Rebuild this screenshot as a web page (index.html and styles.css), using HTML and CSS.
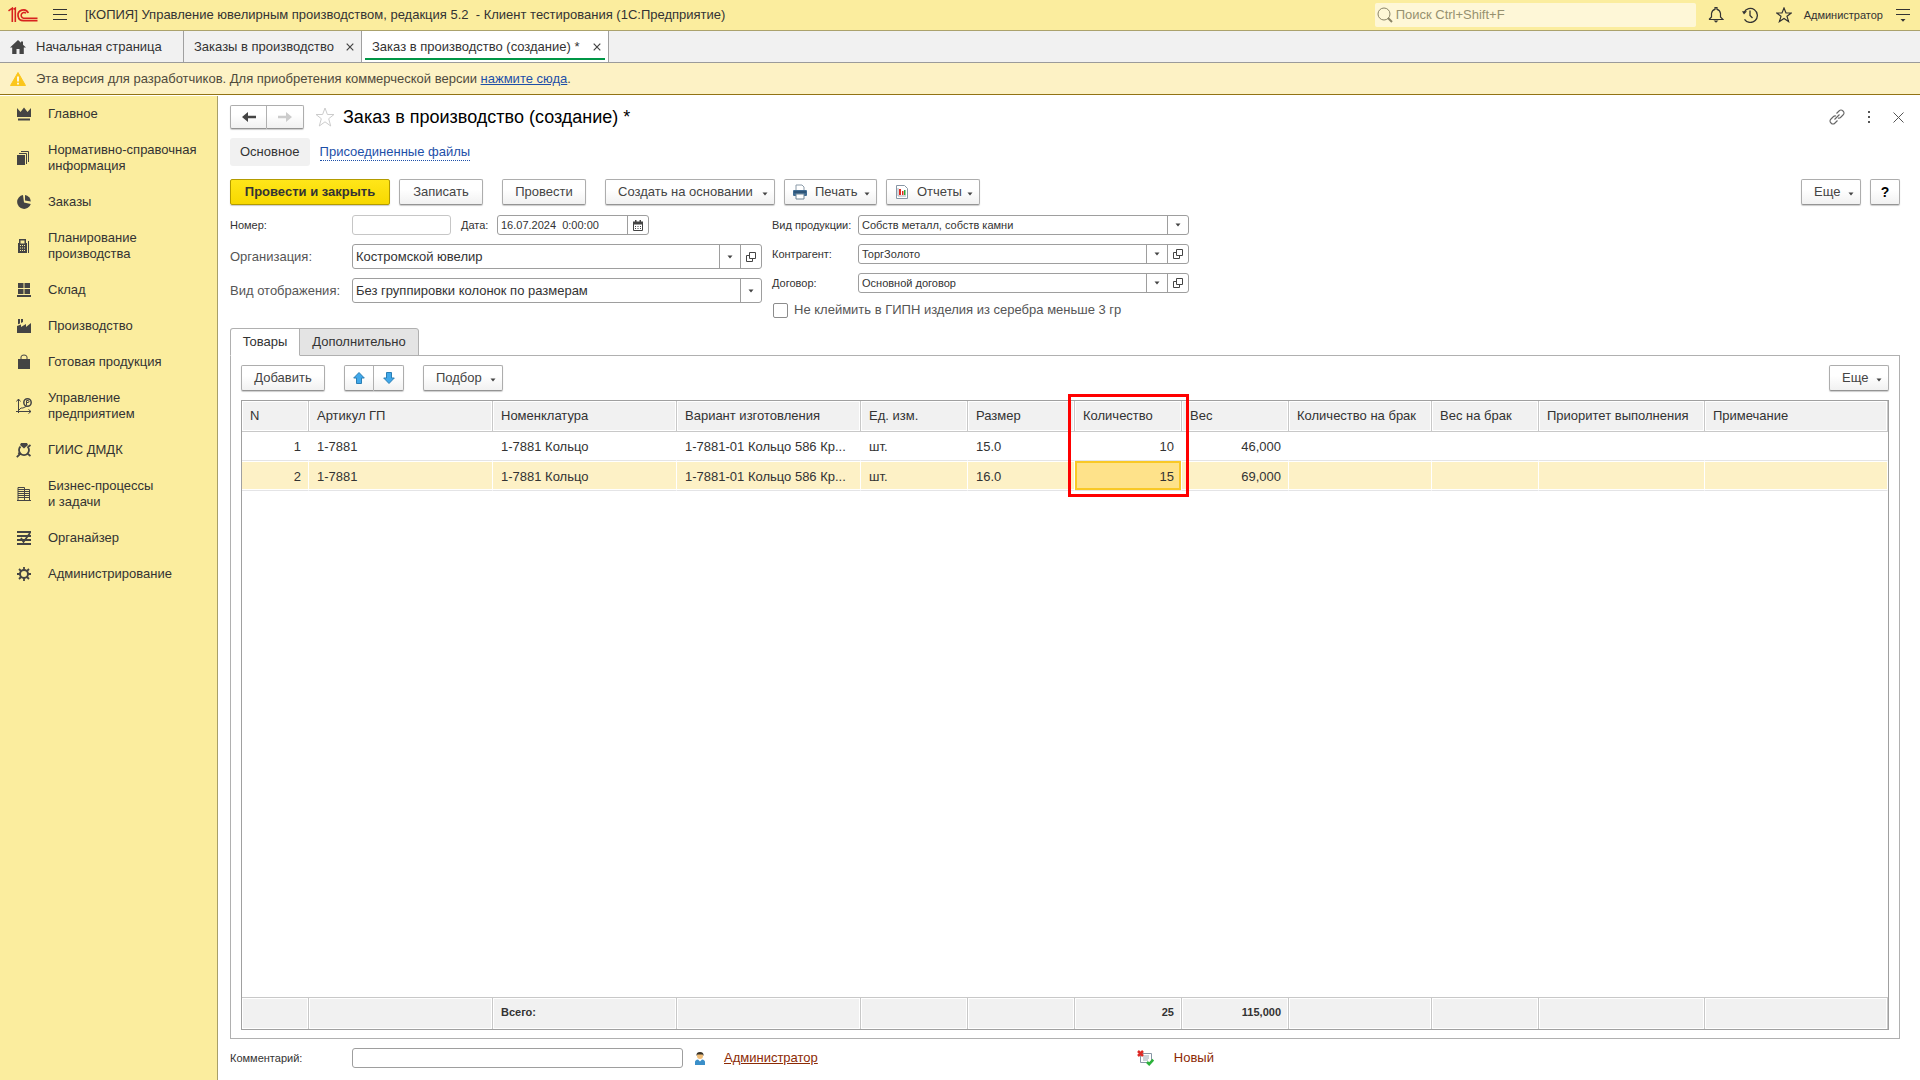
FILE: index.html
```html
<!DOCTYPE html>
<html lang="ru">
<head>
<meta charset="utf-8">
<title>Заказ в производство (создание)</title>
<link rel="stylesheet" href="styles.css">
</head>
<body>
<svg class="defs" aria-hidden="true">
  <symbol id="open" viewBox="0 0 10 10"><path d="M3.5.5h6v6h-6z M3.500 3.500h-3v6h6v-3" fill="none" stroke="#444"/></symbol>
  <symbol id="caret" viewBox="0 0 6 4"><path d="M.5.5h5L3 3.500z" fill="#444"/></symbol>
  <symbol id="cross" viewBox="0 0 8 8"><path d="M.7.7l6.600 6.600M7.300.7L.7 7.300" fill="none" stroke="#444" stroke-width="1.200"/></symbol>
</svg>

<header class="titlebar">
  <svg class="logo" width="30" height="16" viewBox="0 0 30 16" fill="none" stroke="#d8231f"><path d="M.5 3.800L4.300 1.200V15M7.300 15V1.200L5.500 2.200" stroke-width="1.600"/><path d="M20.300 6A5.400 5.400 0 1 0 15.500 13.700H29.500" stroke-width="1.700"/><path d="M18 6.200A2.900 2.900 0 1 0 15.500 11.200H29.500" stroke-width="1.500"/></svg>
  <button class="icon-btn" aria-label="Меню"><svg width="14" height="12" viewBox="0 0 14 12"><path d="M0 .5h14M0 5.500h14M0 10.500h14" stroke="#333"/></svg></button>
  <span class="app-title">[КОПИЯ] Управление ювелирным производством, редакция 5.2&nbsp; - Клиент тестирования (1С:Предприятие)</span>
  <label class="search">
    <svg width="16" height="16" viewBox="0 0 16 16" fill="none" stroke="#8a8467"><circle cx="7" cy="7" r="6"/><path d="M11 11l4 4" stroke-width="2"/></svg>
    <input type="text" placeholder="Поиск Ctrl+Shift+F" aria-label="Поиск">
  </label>
  <button class="icon-btn" aria-label="Оповещения"><svg width="16" height="16" viewBox="0 0 16 16" fill="none" stroke="#333"><path d="M1 12.500H15L12.500 10V6.500Q12 3 9 2.300V.7H7V2.300Q4 3 3.500 6.500V10L1 12.500" stroke-width="1.200"/><path d="M5.500 13.500h5L8 15.700z" fill="#333" stroke="none"/></svg></button>
  <button class="icon-btn" aria-label="История"><svg width="16" height="16" viewBox="0 0 16 16" fill="none" stroke="#333" stroke-width="1.300"><path d="M2 5.500A7 7 0 1 1 2.500 12.300M8 3.500V8.500L10.500 11"/><path d="M0 4.300h5L2 7.500z" fill="#333" stroke="none"/></svg></button>
  <button class="icon-btn" aria-label="Избранное"><svg width="16" height="16" viewBox="0 0 16 16"><path d="M8 1l2 5h5.200l-4.200 3.300 1.600 5.300L8 11.500l-4.600 3.100L5 9.300.8 6H6z" fill="none" stroke="#333" stroke-width="1.200"/></svg></button>
  <span class="user small">Администратор</span>
  <button class="icon-btn" aria-label="Настройки"><svg width="14" height="13" viewBox="0 0 14 13"><path d="M0 .5h14M0 5.500h14" stroke="#333"/><path d="M4.500 10h5L7 12.800z" fill="#333"/></svg></button>
</header>

<nav class="tabs" aria-label="Окна">
  <button class="tab home"><svg width="16" height="14" viewBox="0 0 16 14"><path d="M8 0L0 7.500h2.200V14H6.500V9h3v5h4.300V7.500H16l-3-2.800V1.500h-2v1.300z" fill="#444"/></svg>Начальная страница</button>
  <button class="tab list">Заказы в производство<svg width="8" height="8"><use href="#cross"/></svg></button>
  <button class="tab active">Заказ в производство (создание) *<svg width="8" height="8"><use href="#cross"/></svg></button>
</nav>

<div class="banner">
  <svg width="16" height="14" viewBox="0 0 16 14"><path d="M8 .5L15.500 13.500H.5z" fill="#fbc61c" stroke="#fbc61c"/><path d="M8 4.500V9.500M8 10.700v1.700" stroke="#fff" stroke-width="1.700"/></svg>
  <span>Эта версия для разработчиков. Для приобретения коммерческой версии <a href="#">нажмите сюда</a>.</span>
</div>

<div class="workspace">
  <nav class="sidebar" aria-label="Разделы">
    <a href="#"><svg viewBox="0 0 16 16"><path d="M1 2l3.500 4L8 1.500 11.500 6 15 2v9H1zM2 12.500h12v2H2z"/></svg>Главное</a>
    <a href="#"><svg viewBox="0 0 16 16"><path d="M1 5h8v10H1z"/><path d="M3 3.500h7.500V14M5 1.500h7.500V12" fill="none" stroke="#444"/></svg>Нормативно-справочная информация</a>
    <a href="#"><svg viewBox="0 0 16 16"><path d="M7 1a7 7 0 1 0 7.800 9L8 8.500z"/><path d="M9 1v5.500l5.800 1A6.500 6.500 0 0 0 9 1z"/></svg>Заказы</a>
    <a href="#"><svg viewBox="0 0 16 16"><path fill-rule="evenodd" d="M2 5h1V1h7v4h1v10H2zM4.500 2.500v3h4v-3zM4 7v1h1V7zM6 7v1h1V7zM8 7v1h1V7zM4 9.500v1h1v-1zM6 9.500v1h1v-1zM8 9.500v1h1v-1zM4 12v1h1v-1zM6 12v1h1v-1zM8 12v1h1v-1zM12 3h1v12h-1z"/></svg>Планирование производства</a>
    <a href="#"><svg viewBox="0 0 16 16"><path d="M2 1h5.500v5H2zM8.500 1H14v5H8.500zM2 7h5.500v5H2zM8.500 7H14v5H8.500zM1 13h14v2H1z"/></svg>Склад</a>
    <a href="#"><svg viewBox="0 0 16 16"><path d="M1 15V8l4-1.500V9l5-3v3l5-4v10zM2 1h2v4.500L2 6.300zM5 1h2v3l-2 1z"/></svg>Производство</a>
    <a href="#"><svg viewBox="0 0 16 16"><path d="M2 5h12v10H2z"/><path d="M5 7V3q0-2 3-2t3 2v4" fill="none" stroke="#444"/></svg>Готовая продукция</a>
    <a href="#"><svg viewBox="0 0 16 16"><path d="M2.500 1v14M0 13.500h15M.5 3.500l2-2.500 2 2.500M12.500 11.500l2.500 2-2.500 2M3 12l2-2h2l4-2" fill="none" stroke="#444"/><circle cx="11.500" cy="4.500" r="3.700" fill="none" stroke="#444" stroke-width="1.500"/><path d="M10.500 7V2.500h1.500q1 0 1 1t-1 1h-2" fill="none" stroke="#444"/></svg>Управление предприятием</a>
    <a href="#"><svg viewBox="0 0 16 16"><path d="M5 1h6l1 2-4 3.500L4 3z"/><path d="M4.500 4.500a5 5 0 1 0 7 0M4 12L.8 15.200M2.500 10.500L4 13M12 5l2.500-2M12 12l2.500 2" fill="none" stroke="#444" stroke-width="1.800"/></svg>ГИИС ДМДК</a>
    <a href="#"><svg viewBox="0 0 16 16"><path d="M2 1.500h6.500v13H2zM8.500 3.500h5v11h-5M2 3.500h6.500M2 5.500h11.500M2 7.500h11.500M2 9.500h11.500M2 11.500h11.500M1 14.500h14" fill="none" stroke="#444"/></svg>Бизнес-процессы и&nbsp;задачи</a>
    <a href="#"><svg viewBox="0 0 16 16"><path d="M1 2h14M1 6h14M1 10h14M1 14h14" fill="none" stroke="#444" stroke-width="1.800"/><path d="M5 8l2.500 4L14 3" fill="none" stroke="#444" stroke-width="1.800"/></svg>Органайзер</a>
    <a href="#"><svg viewBox="0 0 16 16"><g fill="none" stroke="#444"><circle cx="8" cy="8" r="4" stroke-width="2"/><path d="M8 1v3M8 12v3M1 8h3M12 8h3M3 3l2 2M11 11l2 2M13 3l-2 2M5 11l-2 2" stroke-width="1.800"/></g></svg>Администрирование</a>
  </nav>

  <main class="form">
    <div class="form-head">
      <div class="pair nav-pair">
        <button class="btn" aria-label="Назад"><svg width="14" height="10" viewBox="0 0 14 10"><path d="M6 0L0 5l6 5V6.200h8V3.800H6z" fill="#444"/></svg></button><button class="btn" aria-label="Вперед"><svg width="14" height="10" viewBox="0 0 14 10"><path d="M8 0l6 5-6 5V6.200H0V3.800h8z" fill="#ccc"/></svg></button>
      </div>
      <svg width="20" height="20" viewBox="0 0 20 20"><path d="M10 1l2.400 6.500H19l-5.300 4.200 2 7.300L10 14.800 4.300 19l2-7.300L1 7.500h6.600z" fill="none" stroke="#ccc"/></svg>
      <h1>Заказ в производство (создание) *</h1>
      <div class="head-tools">
        <button class="icon-btn" aria-label="Ссылка"><svg width="16" height="16" viewBox="0 0 16 16" fill="none" stroke="#666" stroke-width="1.100"><path d="M7.500 4.500L10 2q2-2 4 0t0 4l-2.500 2.500q-1 1-2.500.5M8.500 11.500L6 14q-2 2-4 0t0-4l2.500-2.500q1-1 2.500-.5M5.500 10.500l5-5"/></svg></button>
        <button class="icon-btn" aria-label="Действия"><svg width="4" height="12" viewBox="0 0 4 12"><path d="M1 0h2v2H1zM1 5h2v2H1zM1 10h2v2H1z" fill="#555"/></svg></button>
        <button class="icon-btn" aria-label="Закрыть"><svg width="11" height="11" viewBox="0 0 11 11"><path d="M.5.5l10 10M10.500.5l-10 10" stroke="#555"/></svg></button>
      </div>
    </div>

    <nav class="sections" aria-label="Разделы формы">
      <span class="current">Основное</span>
      <a href="#">Присоединенные файлы</a>
    </nav>

    <div class="commands">
      <button class="btn primary">Провести и закрыть</button>
      <button class="btn save">Записать</button>
      <button class="btn save apart">Провести</button>
      <button class="btn create apart menu">Создать на основании<svg width="6" height="4"><use href="#caret"/></svg></button>
      <button class="btn menu iconed"><svg width="16" height="16" viewBox="0 0 16 16"><path d="M4 1h6l2 2v4H4z" fill="#fff" stroke="#8a9aa8"/><rect x="1" y="6" width="14" height="6" rx="1" fill="#3f6c93"/><path d="M2 8h12" stroke="#1f3f5c"/><path d="M4 10h8v5H4z" fill="#fff" stroke="#6f8494"/></svg>Печать<svg width="6" height="4"><use href="#caret"/></svg></button>
      <button class="btn menu iconed"><svg width="16" height="16" viewBox="0 0 16 16"><path d="M2.500 1.500h8l3 3v10h-11z" fill="#fff" stroke="#8796a5"/><path d="M5 5h2v6H5z" fill="#e02a20"/><path d="M8 7h1.500v4H8z" fill="#e02a20"/><path d="M10 6h1.500v5H10z" fill="#2aa83a"/><path d="M4 4v8h8" fill="none" stroke="#a7b2bc"/></svg>Отчеты<svg width="6" height="4"><use href="#caret"/></svg></button>
      <button class="btn menu end">Еще<svg width="6" height="4"><use href="#caret"/></svg></button>
      <button class="btn help">?</button>
    </div>

    <div class="fields">
      <div class="col-left">
        <div class="row small">
          <label class="lbl" for="num">Номер:</label>
          <span class="box num"><input id="num" type="text"></span>
          <label class="date-lbl" for="date">Дата:</label>
          <span class="box date"><input id="date" type="text" value="16.07.2024  0:00:00"><button aria-label="Календарь"><svg width="10" height="11" viewBox="0 0 10 11"><path d="M.5 2.500h9v8h-9z" fill="none" stroke="#444"/><path d="M0 1.500h10v3H0zM2 0h1.500v2H2zM6.500 0H8v2H6.500zM2 6h1v1H2zM4.500 6h1v1h-1zM7 6h1v1H7zM2 8h1v1H2zM4.500 8h1v1h-1zM7 8h1v1H7z" fill="#444"/></svg></button></span>
        </div>
        <div class="row">
          <label class="lbl" for="org">Организация:</label>
          <span class="box"><input id="org" type="text" value="Костромской ювелир"><button aria-label="Выбрать"><svg width="6" height="4"><use href="#caret"/></svg></button><button aria-label="Открыть"><svg width="10" height="10"><use href="#open"/></svg></button></span>
        </div>
        <div class="row">
          <label class="lbl" for="view">Вид отображения:</label>
          <span class="box"><input id="view" type="text" value="Без группировки колонок по размерам"><button aria-label="Выбрать"><svg width="6" height="4"><use href="#caret"/></svg></button></span>
        </div>
      </div>
      <div class="col-right">
        <div class="row small">
          <label class="lbl" for="kind">Вид продукции:</label>
          <span class="box"><input id="kind" type="text" value="Собств металл, собств камни"><button aria-label="Выбрать"><svg width="6" height="4"><use href="#caret"/></svg></button></span>
        </div>
        <div class="row small">
          <label class="lbl" for="agent">Контрагент:</label>
          <span class="box"><input id="agent" type="text" value="ТоргЗолото"><button aria-label="Выбрать"><svg width="6" height="4"><use href="#caret"/></svg></button><button aria-label="Открыть"><svg width="10" height="10"><use href="#open"/></svg></button></span>
        </div>
        <div class="row small">
          <label class="lbl" for="deal">Договор:</label>
          <span class="box"><input id="deal" type="text" value="Основной договор"><button aria-label="Выбрать"><svg width="6" height="4"><use href="#caret"/></svg></button><button aria-label="Открыть"><svg width="10" height="10"><use href="#open"/></svg></button></span>
        </div>
        <label class="check"><input type="checkbox">Не клеймить в ГИПН изделия из серебра меньше 3 гр</label>
      </div>
    </div>

    <div class="pages">
      <button class="page active">Товары</button><button class="page">Дополнительно</button>
    </div>
    <section class="panel">
      <div class="commands">
        <button class="btn save">Добавить</button>
        <div class="pair apart">
          <button class="btn" aria-label="Вверх"><svg width="12" height="12" viewBox="0 0 12 12"><path d="M6 .5L11.300 6H8.500v5.500h-5V6H.7z" fill="#41a8ea" stroke="#2b7fb5"/></svg></button><button class="btn" aria-label="Вниз"><svg width="12" height="12" viewBox="0 0 12 12"><path d="M6 11.500L11.300 6H8.500V.5h-5V6H.7z" fill="#41a8ea" stroke="#2b7fb5"/></svg></button>
        </div>
        <button class="btn pick menu apart">Подбор<svg width="6" height="4"><use href="#caret"/></svg></button>
        <button class="btn menu end">Еще<svg width="6" height="4"><use href="#caret"/></svg></button>
      </div>
      <div class="grid">
        <table>
          <colgroup><col class="w-n"><col class="w-l"><col class="w-l"><col class="w-l"><col class="w-s"><col class="w-s"><col class="w-s"><col class="w-s"><col class="w-q"><col class="w-s"><col class="w-p"><col></colgroup>
          <thead>
            <tr><th>N</th><th>Артикул ГП</th><th>Номенклатура</th><th>Вариант изготовления</th><th>Ед. изм.</th><th>Размер</th><th class="marked">Количество<span class="marker"></span></th><th>Вес</th><th>Количество на брак</th><th>Вес на брак</th><th>Приоритет выполнения</th><th>Примечание</th></tr>
          </thead>
          <tbody>
            <tr><td class="r">1</td><td>1-7881</td><td>1-7881 Кольцо</td><td>1-7881-01 Кольцо 586 Кр...</td><td>шт.</td><td>15.0</td><td class="r">10</td><td class="r">46,000</td><td></td><td></td><td></td><td></td></tr>
            <tr class="selected"><td class="r">2</td><td>1-7881</td><td>1-7881 Кольцо</td><td>1-7881-01 Кольцо 586 Кр...</td><td>шт.</td><td>16.0</td><td class="r focus">15</td><td class="r">69,000</td><td></td><td></td><td></td><td></td></tr>
            <tr class="rest"><td colspan="12"></td></tr>
          </tbody>
          <tfoot>
            <tr><td></td><td></td><td>Всего:</td><td></td><td></td><td></td><td class="r">25</td><td class="r">115,000</td><td></td><td></td><td></td><td></td></tr>
          </tfoot>
        </table>
      </div>
    </section>

    <footer class="bottom">
      <div class="row small comment">
        <label class="lbl" for="comment">Комментарий:</label>
        <span class="box"><input id="comment" type="text"></span>
      </div>
      <svg width="10" height="13" viewBox="0 0 10 13"><path d="M0 13V10q0-2 3-2.500l2 2 2-2q3 .5 3 2.500v3z" fill="#3a8fc9"/><circle cx="5" cy="4" r="3" fill="#f0bd78"/><path d="M1.500 4Q1 0 5 0t3.500 4L7.500 2.500h-5z" fill="#3a3428"/></svg>
      <a class="author" href="#">Администратор</a>
      <div class="status">
        <svg width="17" height="16" viewBox="0 0 17 16"><path d="M3.500 3.500h11v9h-11z" fill="#fff" stroke="#8796a5"/><path d="M6 6h6M6 8h6M6 10h5" stroke="#9aa7b3"/><path d="M1 1l5 5M6 1L1 6" stroke="#dd2a26" stroke-width="2.500"/><path d="M10 12l2.200 2.200 4-4.500" fill="none" stroke="#2cb23c" stroke-width="2.500"/></svg>
        <span>Новый</span>
      </div>
    </footer>
  </main>
</div>
</body>
</html>
```
FILE: styles.css
```css
* { box-sizing: border-box; }
body {
  margin: 0;
  min-height: 100vh;
  display: flex;
  flex-direction: column;
  font: 13px/16px "Liberation Sans", Arial, sans-serif;
  color: #333;
  background: #fff;
}
button, input { font: inherit; color: inherit; }
button { margin: 0; padding: 0; cursor: pointer; white-space: nowrap; }
svg { flex: none; display: block; }
.defs { position: absolute; width: 0; height: 0; }
.small { font-size: 11px; }

.titlebar {
  display: flex;
  align-items: center;
  height: 31px;
  padding: 0 10px 0 8px;
  gap: 18px;
  background: #fbed9e;
  border-bottom: 1px solid #aba26c;
}
.titlebar .logo { margin-right: -3px; }
.icon-btn { display: flex; align-items: center; justify-content: center; border: 0; background: none; }
.search {
  display: flex;
  align-items: center;
  gap: 3px;
  width: 321px;
  height: 24px;
  margin-left: auto;
  margin-right: -6px;
  padding: 0 2px;
  border-radius: 2px;
  background: #fef7d7;
}
.search input { flex: 1; min-width: 0; padding: 0; border: 0; outline: 0; background: none; }
.search input::placeholder { color: #96916f; opacity: 1; }
.user { margin: 0 -5px 0 -6px; }

.tabs { display: flex; height: 32px; background: #f1f1f1; border-bottom: 1px solid #9b9b9b; }
.tab {
  display: flex;
  align-items: center;
  justify-content: space-between;
  padding: 0 7px 0 10px;
  border: 0;
  border-right: 1px solid #a0a0a0;
  background: none;
}
.tab.home { min-width: 184px; justify-content: flex-start; gap: 10px; }
.tab.list { min-width: 178px; }
.tab.active { min-width: 247px; background: linear-gradient(#009646, #009646) center bottom 2px / calc(100% - 6px) 2px no-repeat #fff; }

.banner {
  display: flex;
  align-items: center;
  gap: 10px;
  height: 32px;
  padding: 0 10px;
  color: #4f4a3c;
  background: #fdf2c5;
  border-bottom: 1px solid #927314;
}
a { color: #1d4fa8; }

.workspace { display: flex; flex: 1; padding-top: 1px; }
.sidebar { width: 218px; flex: none; background: #fbed9e; border-right: 1px solid #a89f68; }
.sidebar a {
  display: flex;
  align-items: center;
  gap: 16px;
  padding: 10px 12px 10px 16px;
  color: #333;
  text-decoration: none;
}
.sidebar svg { width: 16px; height: 16px; fill: #444; }

.form { flex: 1; min-width: 0; display: flex; flex-direction: column; padding: 9px 20px 12px 12px; }
.form-head { display: flex; align-items: center; height: 24px; gap: 10px; }
.form-head h1 { margin: 0 0 0 -2px; font-size: 18px; line-height: 24px; font-weight: 400; color: #000; }
.head-tools { display: flex; align-items: center; gap: 22px; margin-left: auto; margin-right: -4px; }

.btn {
  display: flex;
  align-items: center;
  justify-content: center;
  height: 26px;
  padding: 0 11px;
  border: 1px solid #adadad;
  border-bottom-color: #949494;
  border-radius: 2px;
  background: linear-gradient(#fff 40%, #f1f1f1);
  box-shadow: 0 1px 1px #ccc;
  color: #444;
}
.btn.primary { min-width: 160px; border-color: #b39b00; background: linear-gradient(#ffe619, #f7d800); font-weight: 700; color: #333; }
.btn.save { min-width: 84px; }
.btn.menu { gap: 5px; min-width: 60px; padding: 0 6px 0 12px; }
.btn.menu svg:last-child { margin-top: 3px; margin-left: auto; }
.btn.create { min-width: 170px; }
.btn.pick { min-width: 80px; }
.btn.iconed { min-width: 93px; padding-left: 7px; }
.btn.iconed svg:first-child { margin-right: 2px; }
.btn.help { width: 30px; padding: 0; font-size: 14px; font-weight: 700; color: #000; }
.pair { display: flex; }
.pair .btn { width: 30px; padding: 0; }
.pair .btn:first-child { border-radius: 2px 0 0 2px; }
.pair .btn:last-child { border-left: 0; border-radius: 0 2px 2px 0; }
.nav-pair .btn { width: 37px; height: 24px; }
.nav-pair { margin-right: 1px; }

.sections { display: flex; align-items: center; gap: 10px; height: 28px; margin-top: 9px; }
.sections .current { padding: 6px 10px; border-radius: 3px; background: #f1f1f1; }
.sections a { text-decoration: none; border-bottom: 1px dotted #1d4fa8; }

.commands { display: flex; gap: 9px; }
.sections + .commands { margin-top: 13px; }
.commands .apart { margin-left: 10px; }
.commands .end { margin-left: auto; }

.fields { display: flex; gap: 10px; margin-top: 10px; }
.col-left, .col-right { display: flex; flex-direction: column; gap: 9px; }
.col-left { width: 532px; }
.col-right { width: 417px; }
.row { display: flex; align-items: center; height: 25px; }
.row.small { height: 20px; }
.row .lbl { flex: none; width: 122px; color: #555; }
.row.small label { color: #333; }
.col-right .row .lbl { width: 86px; }
.box {
  display: flex;
  flex: 1;
  min-width: 0;
  height: 100%;
  border: 1px solid #9e9e9e;
  border-radius: 3px;
  background: #fff;
}
.box input { flex: 1; min-width: 0; padding: 0 3px; border: 0; outline: 0; background: none; white-space: pre; }
.box button { display: flex; align-items: center; justify-content: center; width: 21px; border: 0; border-left: 1px solid #9e9e9e; background: none; }
.box.num { flex: none; width: 99px; border-color: #c6c6c6; }
.box.date { flex: none; width: 152px; }
.date-lbl { width: 36px; margin-left: 10px; }
.check { display: flex; align-items: center; gap: 6px; height: 16px; color: #555; }
.check input { appearance: none; width: 15px; height: 15px; margin: 0 0 0 1px; border: 1px solid #8c8c8c; border-radius: 2px; background: #fff; }

.pages { display: flex; margin-top: 10px; height: 28px; }
.page { min-width: 120px; padding: 0 10px; border: 1px solid #b0b0b0; background: #e4e4e4; border-radius: 0 3px 0 0; margin-left: -1px; }
.page.active { position: relative; min-width: 70px; margin: 0; border-bottom-color: #fff; border-radius: 3px 0 0 0; background: #fff; }
.panel { display: flex; flex: 1; flex-direction: column; margin-top: -1px; padding: 9px 10px 8px; border: 1px solid #b0b0b0; }
.grid { display: flex; flex: 1; flex-direction: column; margin-top: 9px; border: 1px solid #a0a0a0; }
.grid table { flex: 1; width: 100%; table-layout: fixed; border-collapse: separate; border-spacing: 0; }
.w-n { width: 67px; }
.w-l { width: 184px; }
.w-s { width: 107px; }
.w-q { width: 143px; }
.w-p { width: 166px; }
th, td { padding: 0 8px; text-align: left; font-weight: 400; overflow: hidden; text-overflow: ellipsis; white-space: nowrap; }
th { height: 31px; background: #f1f1f1; border-right: 1px solid #c8c8c8; border-bottom: 1px solid #c8c8c8; box-shadow: inset 0 0 0 1px #fff; }
td { height: 29px; padding: 2px 7px 0 8px; border-right: 1px solid #fff; border-bottom: 1px solid #e4e4e6; }
.r { text-align: right; }
.selected td { height: 30px; background: #fdf1c6; box-shadow: inset 0 1px #fff, inset 0 -1px #fff; }
.selected .focus { background: #fee28a; box-shadow: inset 0 0 0 2px #f9c826; }
.rest td { height: auto; border: 0; }
tfoot td { height: 32px; padding: 0 7px 4px 8px; font-size: 11px; font-weight: 700; background: #f1f1f1; border-right: 1px solid #c8c8c8; border-top: 1px solid #c8c8c8; border-bottom: 0; box-shadow: inset 0 0 0 1px #fff; }
.marked { position: relative; overflow: visible; }
.marker { position: absolute; z-index: 1; top: -7px; left: -7px; width: 121px; height: 103px; border: 3px solid #f00; pointer-events: none; }

.bottom { display: flex; align-items: center; height: 20px; margin-top: 9px; }
.comment { width: 453px; margin-right: 12px; }
.author { margin-left: 19px; color: #8c2a04; }
.status { display: flex; align-items: center; gap: 20px; margin-left: 319px; color: #8c2a04; }
```
